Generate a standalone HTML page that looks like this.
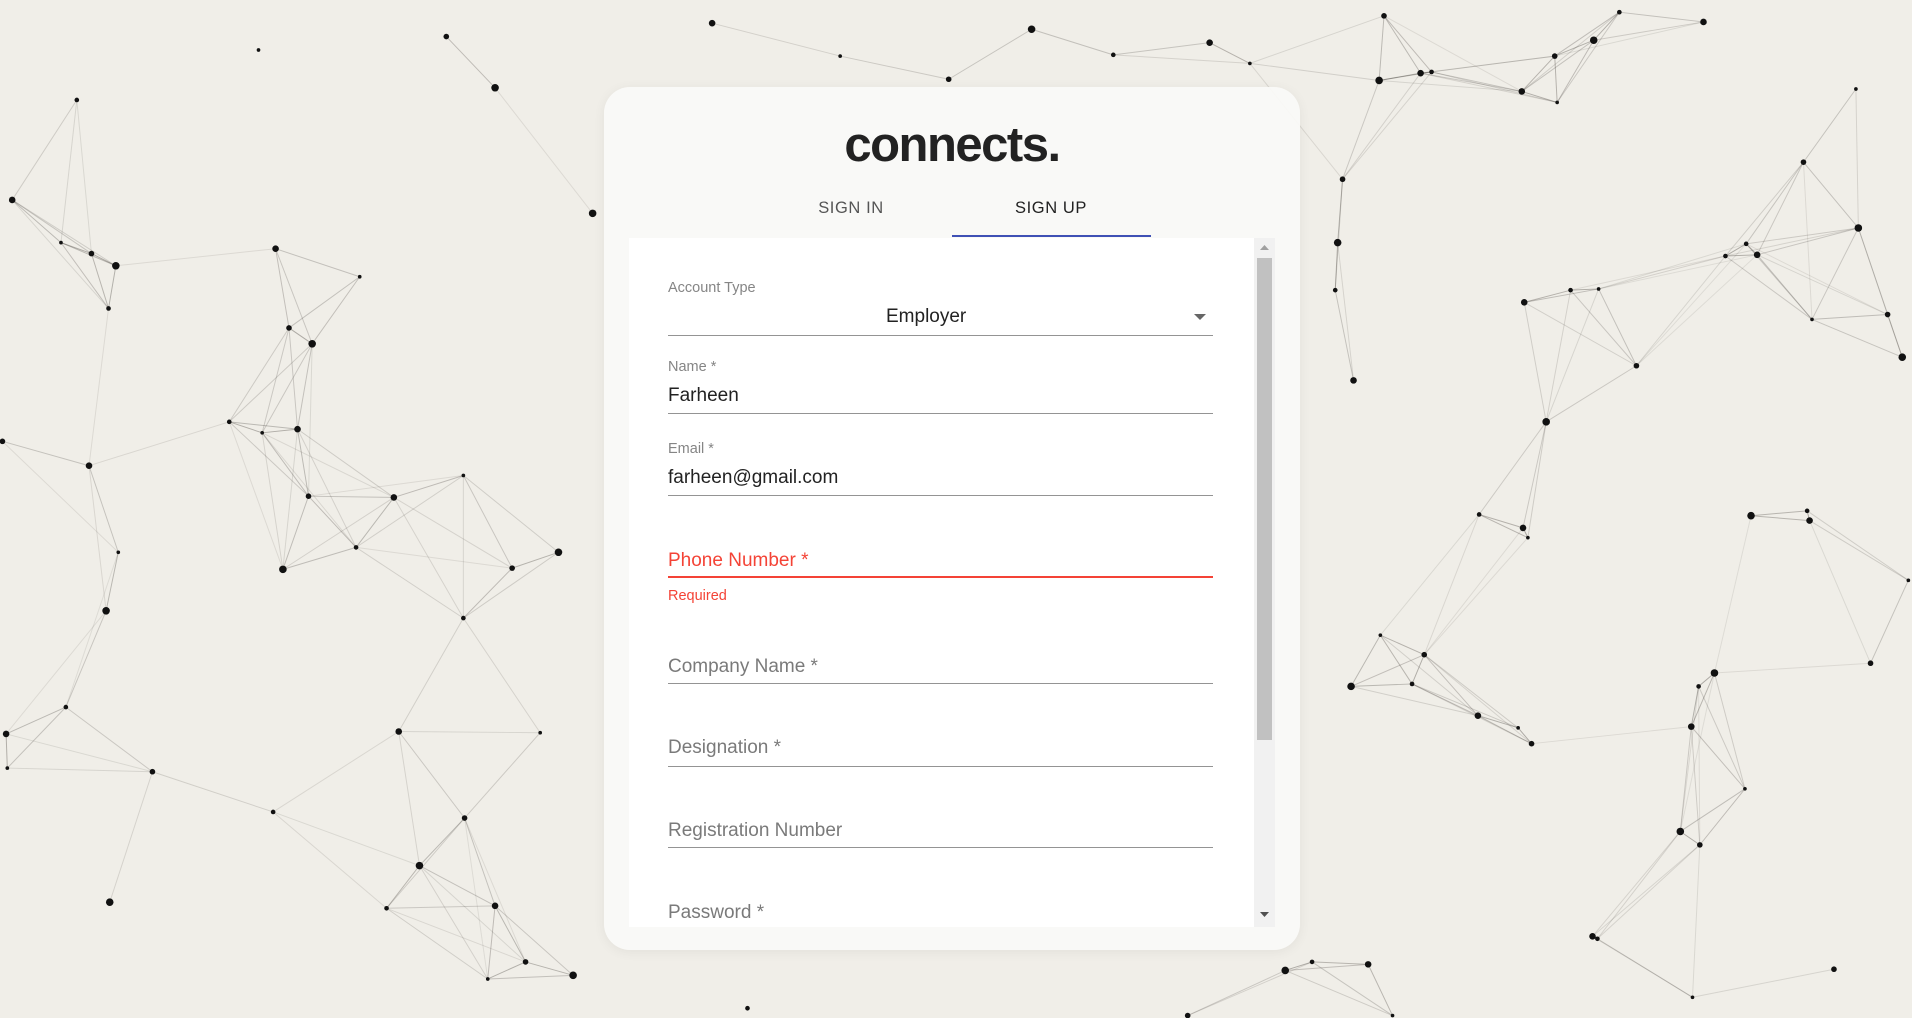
<!DOCTYPE html>
<html><head><meta charset="utf-8"><style>
html,body{margin:0;padding:0;width:1912px;height:1018px;overflow:hidden;background:#f0eee8;font-family:"Liberation Sans",Arial,sans-serif;}
#bg{position:absolute;left:0;top:0;width:1912px;height:1018px}
.card{position:absolute;left:604px;top:87px;width:696px;height:863px;border-radius:26px;background:rgba(250,250,248,0.93);box-shadow:0 2px 12px rgba(0,0,0,0.06);}
.logo{position:absolute;left:-4px;width:100%;top:115px;text-align:center;font-weight:bold;font-size:49px;letter-spacing:-1.5px;color:#222;line-height:60px}
.tab{position:absolute;top:199px;font-size:16.5px;letter-spacing:0.6px;color:#555;width:200px;text-align:center}
.ind{position:absolute;left:952px;top:235px;width:199px;height:2px;background:#3f51b5}
.panel{position:absolute;left:629px;top:238px;width:646px;height:689px;background:#fff;overflow:hidden}
.sb{position:absolute;left:1254px;top:238px;width:21px;height:689px;background:#f1f1f1}
.thumb{position:absolute;left:1257px;top:258px;width:15px;height:482px;background:#c1c1c1}
.t{position:absolute;left:668px;white-space:nowrap}
.lbl{font-size:14.5px;color:#858585}
.val{font-size:19px;color:#222}
.ph{font-size:19px;color:#7a7a7a}
.ln{position:absolute;left:668px;width:545px;height:1px;background:#949494}
</style></head><body>
<svg id="bg" viewBox="0 0 1568 835" preserveAspectRatio="none"></svg>
<div class="card"></div>
<div class="logo">connects.</div>
<div class="tab" style="left:751px;color:#555">SIGN IN</div>
<div class="tab" style="left:951px;color:#222">SIGN UP</div>
<div class="ind"></div>
<div class="panel"></div>
<div class="sb"></div>
<div class="thumb"></div>
<svg style="position:absolute;left:1259px;top:244px" width="11" height="8"><path d="M1 6 L5.5 1 L10 6Z" fill="#a0a0a0"/></svg>
<svg style="position:absolute;left:1259px;top:910px" width="11" height="8"><path d="M1 2 L5.5 7 L10 2Z" fill="#505050"/></svg>

<div class="t lbl" style="top:280px">Account Type</div>
<div class="t val" style="top:306px;left:886px">Employer</div>
<svg style="position:absolute;left:1193px;top:313px" width="14" height="8"><path d="M1 1 L7 7 L13 1Z" fill="#666"/></svg>
<div class="ln" style="top:335px"></div>

<div class="t lbl" style="top:359px">Name *</div>
<div class="t val" style="top:385px">Farheen</div>
<div class="ln" style="top:413px"></div>

<div class="t lbl" style="top:441px">Email *</div>
<div class="t val" style="top:467px">farheen@gmail.com</div>
<div class="ln" style="top:495px"></div>

<div class="t" style="top:550px;font-size:19px;color:#f44336">Phone Number *</div>
<div class="ln" style="top:576px;height:2px;background:#f44336"></div>
<div class="t" style="top:588px;font-size:14.5px;color:#f44336">Required</div>

<div class="t ph" style="top:656px">Company Name *</div>
<div class="ln" style="top:683px"></div>
<div class="t ph" style="top:737px">Designation *</div>
<div class="ln" style="top:766px"></div>
<div class="t ph" style="top:820px">Registration Number</div>
<div class="ln" style="top:847px"></div>
<div class="t ph" style="top:902px">Password *</div>

<script>
var P=[[212,41],[366,30],[406,72],[63,82],[10,164],[50,199],[75,208],[95,218],[89,253],[226,204],[295,227],[237,269],[256,282],[188,346],[244,352],[215,355],[253,407],[232,467],[292,449],[323,408],[380,390],[420,466],[458,453],[380,507],[73,382],[97,453],[2,362],[87,501],[54,580],[5,602],[6,630],[125,633],[90,740],[224,666],[327,600],[443,601],[381,671],[344,710],[317,745],[406,743],[400,803],[431,789],[470,800],[613,827],[584,19],[689,46],[778,65],[846,24],[913,45],[992,35],[1025,52],[1135,13],[1131,66],[1174,59],[1248,75],[1277,84],[1275,46],[1307,33],[1328,10],[1397,18],[1522,73],[1479,133],[1524,187],[1415,210],[1441,209],[1486,262],[1548,258],[1560,293],[1288,238],[1250,248],[1311,237],[1342,300],[1268,346],[1213,422],[1249,433],[1253,441],[1101,147],[1097,199],[1095,238],[1110,312],[1132,521],[1168,537],[1108,563],[1158,561],[1212,587],[1245,597],[1256,610],[1436,423],[1482,419],[1484,427],[1565,476],[1534,544],[1406,552],[1393,563],[1387,596],[1431,647],[1394,693],[1378,682],[1310,770],[1306,768],[1388,818],[1504,795],[1054,796],[1076,789],[1122,791],[1142,833],[974,833],[486,175],[1432,200],[1165,60]];
var s='';
for(var i=0;i<P.length;i++)for(var j=i+1;j<P.length;j++){var dx=P[i][0]-P[j][0],dy=P[i][1]-P[j][1],d=Math.sqrt(dx*dx+dy*dy);if(d<135){var o=(0.42-d/420).toFixed(2);s+='<line x1="'+P[i][0]+'" y1="'+P[i][1]+'" x2="'+P[j][0]+'" y2="'+P[j][1]+'" stroke="rgba(60,55,50,'+o+')" stroke-width="0.8"/>';}}
for(var i=0;i<P.length;i++){var r=1.5+((i*7)%5)*0.4;s+='<circle cx="'+P[i][0]+'" cy="'+P[i][1]+'" r="'+r+'" fill="#111"/>';}
document.getElementById('bg').innerHTML=s;
</script>
</body></html>
